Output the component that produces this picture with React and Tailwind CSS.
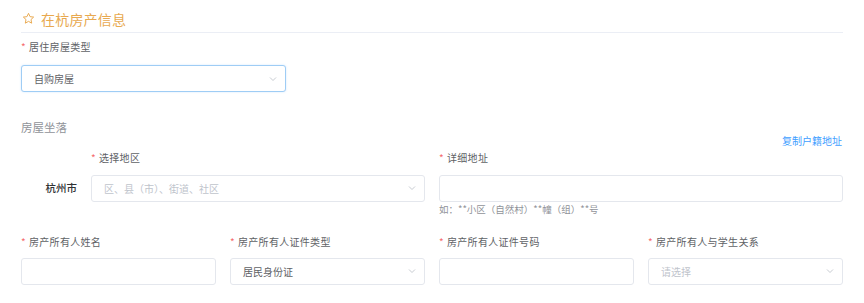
import React from "react";

const Chevron = () => (
  <svg width="10" height="10" viewBox="0 0 10 10" fill="none" className="shrink-0">
    <path d="M2 3.5 L5 6.5 L8 3.5" stroke="#c0c4cc" strokeWidth="0.9" />
  </svg>
);

const Label = ({ children, className = "" }) => (
  <div className={`text-[10px] tracking-[0.3px] leading-none text-[#606266] ${className}`}>
    <span className="text-[#f56c6c] mr-[3px]">*</span>
    {children}
  </div>
);

const Select = ({ value, placeholder, focused = false, className = "" }) => (
  <div
    className={`h-[27px] flex items-center justify-between pl-[12px] pr-[7px] rounded-[3px] border bg-white ${
      focused ? "border-[#9fcdf5] shadow-[0_0_2px_rgba(64,158,255,0.25)]" : "border-[#e4e7ed]"
    } ${className}`}
  >
    {value ? (
      <span className="text-[10px] text-[#606266]">{value}</span>
    ) : (
      <span className="text-[10px] text-[#c0c4cc]">{placeholder}</span>
    )}
    <Chevron />
  </div>
);

const Input = ({ className = "" }) => (
  <div className={`h-[27px] rounded-[3px] border border-[#e4e7ed] bg-white ${className}`} />
);

export default function App() {
  return (
    <div
      className="w-[864px] h-[303px] bg-white px-[21px] overflow-hidden"
      style={{ fontFamily: '"Noto Sans CJK SC", "Noto Sans", sans-serif' }}
    >
      {/* ===== TITLE ===== */}
      <div className="flex items-center gap-[6px] pt-[5px] h-[33px] border-b border-[#ebeef5] pl-[1px]">
        <svg width="13" height="13" viewBox="0 0 24 24" fill="none">
          <path
            d="M12 2.5l2.9 6.1 6.6.8-4.9 4.6 1.3 6.6L12 17.3l-5.9 3.3 1.3-6.6-4.9-4.6 6.6-.8z"
            stroke="#e8a94f"
            strokeWidth="1.8"
            strokeLinejoin="round"
          />
        </svg>
        <span className="text-[14px] tracking-[0.2px] text-[#e8a94f] leading-none">在杭房产信息</span>
      </div>

      {/* ===== 居住房屋类型 ===== */}
      <Label className="mt-[9px]">居住房屋类型</Label>
      <Select value="自购房屋" focused className="mt-[13px] w-[265px]" />

      {/* ===== 房屋坐落 ===== */}
      <div className="mt-[30px] text-[11.5px] text-[#909399] leading-none">房屋坐落</div>

      <div className="flex justify-end mt-[2px] pr-[1px]">
        <span className="text-[10px] text-[#409eff] leading-none">复制户籍地址</span>
      </div>

      <div className="grid grid-cols-2 gap-x-[14px] mt-[7px]">
        <div className="flex flex-col">
          <Label className="ml-[70px]">选择地区</Label>
          <div className="flex items-center mt-[12px]">
            <div className="w-[70px] pr-[14px] text-right text-[10.5px] font-medium text-[#303133]">杭州市</div>
            <Select placeholder="区、县（市）、街道、社区" className="flex-1" />
          </div>
        </div>
        <div className="flex flex-col">
          <Label>详细地址</Label>
          <Input className="mt-[12px]" />
          <div className="mt-[0px] text-[9.5px] text-[#909399] leading-[14px]">如：**小区（自然村）**幢（组）**号</div>
        </div>
      </div>

      {/* ===== 房产所有人 ===== */}
      <div className="grid grid-cols-4 gap-x-[14px] mt-[21px]">
        <div>
          <Label>房产所有人姓名</Label>
          <Input className="mt-[11px]" />
        </div>
        <div>
          <Label>房产所有人证件类型</Label>
          <Select value="居民身份证" className="mt-[11px]" />
        </div>
        <div>
          <Label>房产所有人证件号码</Label>
          <Input className="mt-[11px]" />
        </div>
        <div>
          <Label>房产所有人与学生关系</Label>
          <Select placeholder="请选择" className="mt-[11px]" />
        </div>
      </div>
    </div>
  );
}
